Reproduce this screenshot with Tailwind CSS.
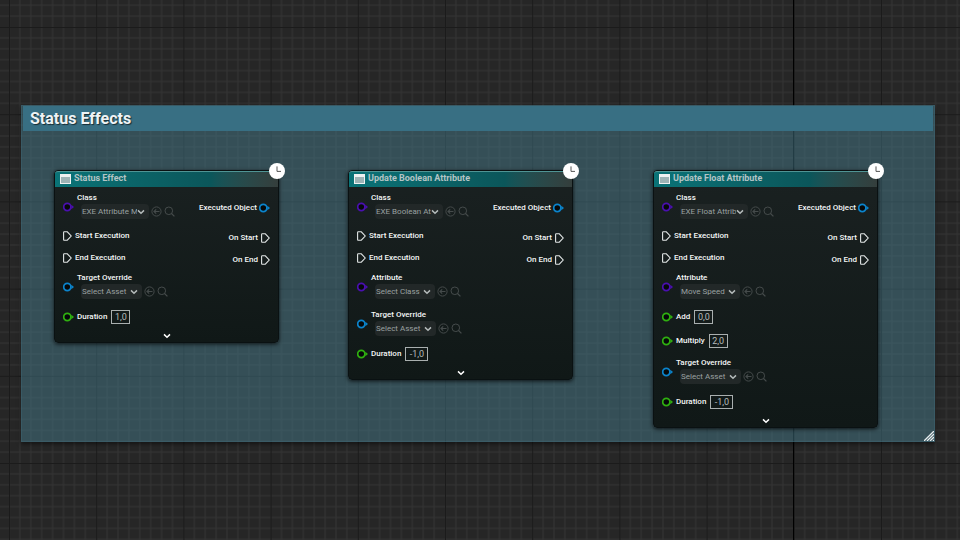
<!DOCTYPE html>
<html lang="en">
<head>
<meta charset="utf-8">
<title>Blueprint Graph – Status Effects</title>
<script src="https://cdn.jsdelivr.net/npm/@tailwindcss/browser@4"></script>
</head>
<body class="bg-[#262626]">
<svg class="hidden">
  <symbol id="pin" viewBox="0 0 11 10"><circle cx="4.3" cy="5" r="3.6" fill="#06090a" stroke="currentColor" stroke-width="1.7"/><path d="M8.4 2.8L11 5 8.4 7.2z" fill="currentColor"/></symbol>
  <symbol id="exec" viewBox="0 0 9 10"><path d="M1.2.8h3.1L8.2 5 4.3 9.2H1.2Q.6 9.2.6 8.6V1.4Q.6.8 1.2.8z" fill="none" stroke="#e2e6e6" stroke-width="1.1"/></symbol>
  <symbol id="chev" viewBox="0 0 8 6"><path d="M1 1.4l3 2.8 3-2.8" fill="none" stroke="currentColor" stroke-width="1.5"/></symbol>
  <symbol id="use" viewBox="0 0 11 11"><circle cx="5.5" cy="5.5" r="4.6" fill="none" stroke="currentColor"/><path d="M8.5 5.5H3M5.2 3.3L3 5.5l2.2 2.2" fill="none" stroke="currentColor" stroke-width="1.2"/></symbol>
  <symbol id="find" viewBox="0 0 11 11"><circle cx="4.8" cy="4.8" r="3.8" fill="none" stroke="currentColor"/><path d="M7.4 7.4l3 3" stroke="currentColor" stroke-width="1.3"/></symbol>
  <symbol id="clock" viewBox="0 0 16 16"><circle cx="8" cy="8" r="8" fill="#fff"/><path d="M8 3.4V8.4h4" fill="none" stroke="#555" stroke-width="1"/></symbol>
</svg>

<main id="graph" class="relative min-h-screen overflow-hidden font-['Roboto',sans-serif] text-[8px] text-[#f4f6f6]">
  <svg class="absolute inset-0 size-full" aria-hidden="true">
    <defs>
      <pattern id="grid" x="9" y="27" width="87.2" height="87.2" patternUnits="userSpaceOnUse">
        <path d="M10.9 0v88M21.8 0v88M32.7 0v88M43.6 0v88M54.5 0v88M65.4 0v88M76.3 0v88M0 10.9h88M0 21.8h88M0 32.7h88M0 43.6h88M0 54.5h88M0 65.4h88M0 76.3h88" stroke="#353535" stroke-width="1"/>
        <path d="M.5 0v88M0 .5h88" stroke="#1b1b1b" stroke-width="1"/>
      </pattern>
    </defs>
    <rect width="100%" height="100%" fill="url(#grid)"/>
    <path d="M793.5 0v2000" stroke="#000"/>
  </svg>

  <section class="absolute left-[21px] right-[25px] top-[105px] flex h-[337px] flex-col border border-[#3b6371]/50 bg-[#447888]/50 shadow-[0_2px_4px_rgba(0,0,0,0.5)]">
    <h1 class="mx-px bg-[#386f83] px-[7px] pt-px text-base leading-6 font-bold text-[#eef3f5] [text-shadow:1px_1px_1px_rgba(0,0,0,0.6)]">Status Effects</h1>
    <svg class="mt-auto ml-auto size-[10px]" viewBox="0 0 10 10" aria-hidden="true"><path d="M0 10L10 0M3 10L10 3M6 10L10 6M9 10L10 9" stroke="#e8eef0" stroke-width="1.3"/></svg>
  </section>
</main>

<script>
const pinColor = { cls: 'text-[#4a0fb0]', obj: 'text-[#0b84cc]', num: 'text-[#2fb010]' };
const pin = kind => `<svg class="h-[10px] w-[11px] ${pinColor[kind]}"><use href="#pin"/></svg>`;
const execIcon = '<svg class="h-[10px] w-[9px]"><use href="#exec"/></svg>';
let nextId = 0;

// Pin with a label above an asset or class picker
function picker(kind, label, value, width) {
  const id = 'field' + nextId++;
  return `<div class="flex h-[37px] items-center gap-[3px]">${pin(kind)}
    <div class="pb-[2px]"><label for="${id}" class="block leading-3 font-medium">${label}</label>
      <div class="flex items-center gap-[2px] pl-1 text-[#454b4b]">
        <span class="relative flex text-[#b4baba]">
          <select id="${id}" class="h-[15px] ${width} appearance-none rounded-sm bg-[#222828] pr-[12px] pl-px text-[8px] text-[#9aa1a1]"><option>${value}</option></select>
          <svg class="pointer-events-none absolute top-[5px] right-1 h-[6px] w-2"><use href="#chev"/></svg>
        </span>
        <button aria-label="Use selected"><svg class="size-[11px]"><use href="#use"/></svg></button>
        <button aria-label="Browse"><svg class="size-[11px]"><use href="#find"/></svg></button>
      </div></div></div>`;
}

// Pin with an inline number box
function number(label, value) {
  const id = 'field' + nextId++;
  const width = value.length > 3 ? 'w-[23px]' : 'w-[19px]';
  return `<div class="flex h-6 items-center gap-[3px]">${pin('num')}<label for="${id}" class="font-medium">${label}</label>
    <input id="${id}" value="${value}" class="ml-px h-[14px] ${width} border border-[#a9afaf] text-center text-[9px] text-[#b5bbbb]"></div>`;
}

function node(place, title, cls, fields) {
  return `<article class="absolute top-[170px] ${place} w-[225px] rounded-[4px] border border-[#0a1112] bg-linear-to-b from-[#1a2121] to-[#101817] shadow-[0_1px_4px_rgba(0,0,0,0.8)]">
    <header class="flex h-4 items-center gap-[3px] rounded-t-[3px] border-t border-[#4f9494] bg-linear-to-r from-[#0a7377] via-[#0b565a] via-70% to-[#343e3c] pb-px pl-[5px]">
      <svg class="h-[10px] w-[11px]" viewBox="0 0 11 10"><path d="M0 0h11v10H0z" fill="#eef2f2"/><path d="M1 3h9v6H1z" fill="#9db4b6"/></svg>
      <h2 class="text-[9px] font-bold text-[#b4c4c5]">${title}</h2>
    </header>
    <svg class="absolute -top-2 -right-[7px] size-4"><use href="#clock"/></svg>
    <div class="flex justify-between px-2 pt-px">
      <div>
        ${picker('cls', 'Class', cls, 'w-[68px]')}
        <div class="flex h-[22px] items-center gap-[3px] font-medium">${execIcon}Start Execution</div>
        <div class="flex h-[21px] items-center gap-[3px] font-medium">${execIcon}End Execution</div>
        ${fields.join('')}
      </div>
      <div class="flex flex-col items-end font-medium">
        <div class="flex h-[39px] items-center gap-[2px]">Executed Object${pin('obj')}</div>
        <div class="flex h-[22px] items-center gap-[3px]">On Start${execIcon}</div>
        <div class="flex h-[22px] items-center gap-[3px]">On End${execIcon}</div>
      </div>
    </div>
    <button class="mx-auto flex h-[13px] items-center text-white" aria-label="Expand"><svg class="h-[6px] w-2"><use href="#chev"/></svg></button>
  </article>`;
}

const target = () => picker('obj', 'Target Override', 'Select Asset', 'w-[61px]');
document.getElementById('graph').insertAdjacentHTML('beforeend', [
  node('left-[54px]', 'Status Effect', 'EXE Attribute Modifier', [target(), number('Duration', '1,0')]),
  node('left-[348px]', 'Update Boolean Attribute', 'EXE Boolean Attribute', [
    picker('cls', 'Attribute', 'Select Class', 'w-[60px]'), target(), number('Duration', '-1,0')]),
  node('left-[653px]', 'Update Float Attribute', 'EXE Float Attribute', [
    picker('cls', 'Attribute', 'Move Speed', 'w-[60px]'), number('Add', '0,0'), number('Multiply', '2,0'),
    target(), number('Duration', '-1,0')]),
].join(''));
</script>
</body>
</html>
